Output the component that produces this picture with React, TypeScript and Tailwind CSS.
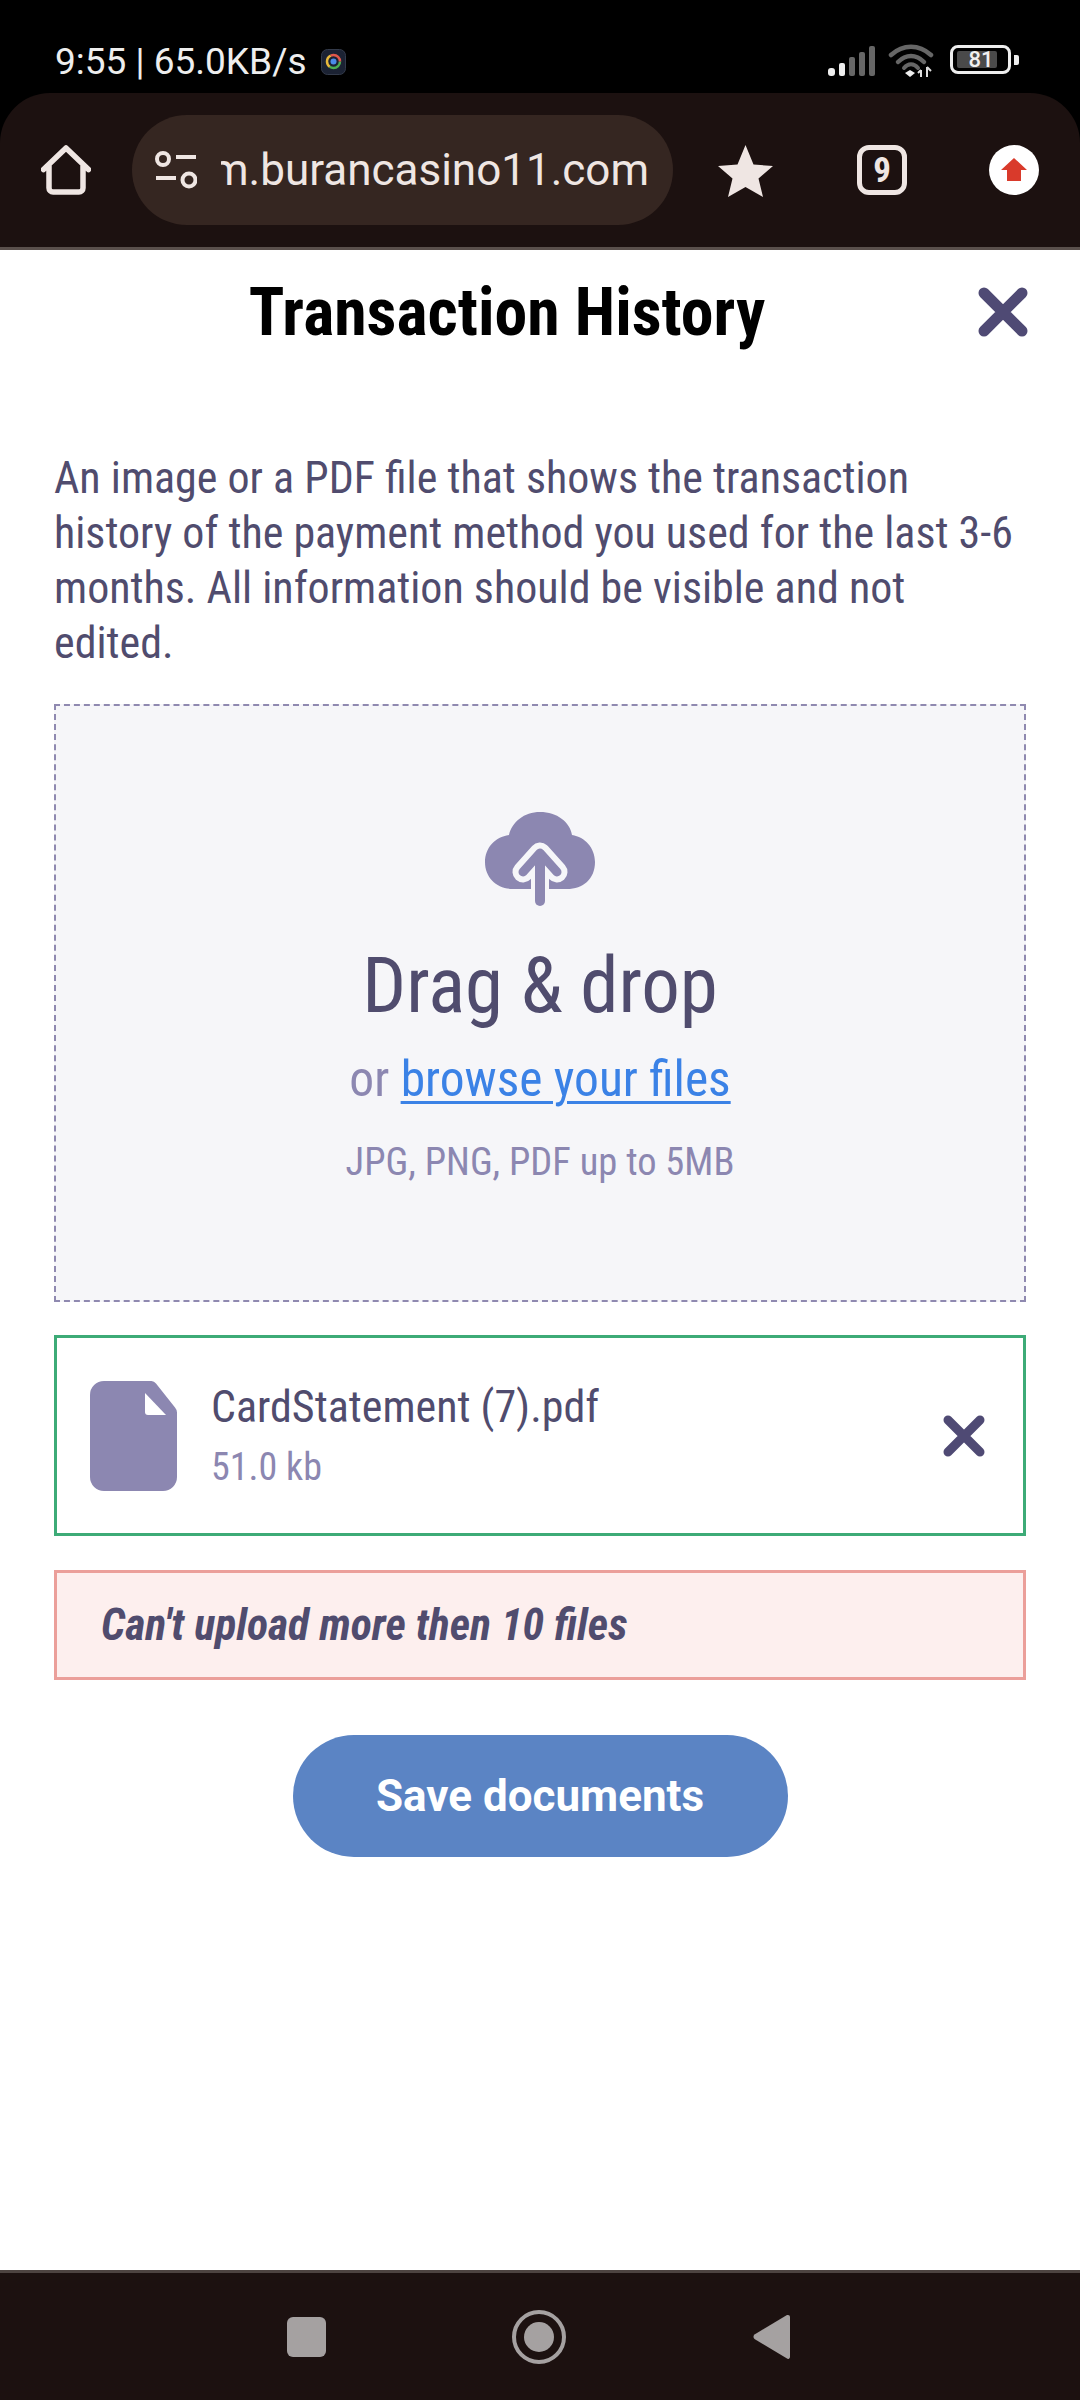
const cond = "font-['Roboto_Condensed','Roboto','Liberation_Sans_Narrow',sans-serif] [font-stretch:75%]";

function Signal() {
  return (
    <svg width="47" height="30" viewBox="0 0 47 30" className="mt-[1px]">
      <rect x="0" y="22" width="7" height="8" rx="3" fill="#eee" />
      <rect x="11" y="17" width="6" height="13" rx="2" fill="#eee" />
      <rect x="21" y="11" width="6" height="19" rx="2" fill="#666" />
      <rect x="31" y="6" width="6" height="24" rx="2" fill="#666" />
      <rect x="41" y="0" width="6" height="30" rx="2" fill="#666" />
    </svg>
  );
}

function Wifi() {
  return (
    <svg width="46" height="34" viewBox="0 0 46 34" fill="none" className="mt-[-1px]">
      <path d="M3 11C15 0 31 0 43 11" stroke="#666" strokeWidth="4.5" strokeLinecap="round" />
      <path d="M10 18C18 10 28 10 36 18" stroke="#666" strokeWidth="4.5" strokeLinecap="round" />
      <path d="M16 24C20 19 26 19 30 24" stroke="#666" strokeWidth="4" strokeLinecap="round" />
      <path d="M17 29l5-3 5 3-5 4z" fill="#eee" />
      <path d="M33 26v7M30 29l3-3" stroke="#ddd" strokeWidth="2" />
      <path d="M39 33v-10M39 23l4 4" stroke="#ddd" strokeWidth="2" />
    </svg>
  );
}

function Battery() {
  return (
    <div className="flex items-center gap-[3px] ml-[3px]">
      <div className="w-[61px] h-[29px] border-[3px] border-[#eeeeee] rounded-[8px] px-[4px] py-[3px] flex">
        <div className="w-[40px] h-full bg-[#4a4a4a] rounded-[2px] flex items-center justify-center text-[#f0f0f0] text-[22px] leading-none font-medium font-['Roboto',sans-serif] pl-[8px]">
          81
        </div>
      </div>
      <div className="w-[5px] h-[10px] bg-[#eeeeee] rounded-r-[2px]" />
    </div>
  );
}

function ChromeBadge() {
  return (
    <svg width="25" height="26" viewBox="0 0 25 26">
      <rect x="0.5" y="0.5" width="24" height="25" rx="6" fill="#1b2233" stroke="#333a4a" />
      <circle cx="12.5" cy="12.5" r="6.5" fill="none" stroke="#4caf50" strokeWidth="2.500" strokeDasharray="14 27" />
      <circle cx="12.5" cy="12.5" r="6.5" fill="none" stroke="#e8b93c" strokeWidth="2.500" strokeDasharray="13 28" strokeDashoffset="-14" />
      <circle cx="12.5" cy="12.5" r="6.5" fill="none" stroke="#e0574a" strokeWidth="2.500" strokeDasharray="14 27" strokeDashoffset="-27" />
      <circle cx="12.5" cy="12.5" r="3" fill="#4a8be8" />
    </svg>
  );
}

export default function App() {
  return (
    <div className="w-[1080px] h-[2400px] flex flex-col bg-black overflow-hidden font-['Roboto',sans-serif]">
      <div className="h-[93px] shrink-0 flex items-start justify-between pl-[55px] pr-[61px] pt-[39px] bg-black">
        <div className="flex items-center gap-[14px] mt-[2px] text-[37px] leading-[42px] text-[#eeeeee]">
          <span>9:55 | 65.0KB/s</span>
          <ChromeBadge />
        </div>
        <div className="flex items-start gap-[13px] mt-[6px]">
          <Signal />
          <Wifi />
          <Battery />
        </div>
      </div>

      <div className="h-[157px] shrink-0 bg-[#1c1110] rounded-t-[50px] border-b-[3px] border-[#5a504c] flex items-start">
        <div className="mt-[52px] ml-[41px] w-[50px] h-[50px]">
          <svg width="50" height="50" viewBox="0 0 50 50" fill="none" stroke="#efe6e3" strokeWidth="5.500" strokeLinejoin="round" strokeLinecap="round">
            <path d="M2.500 24.500L25 3l22.500 21.500M8 21v22a4 4 0 0 0 4 4h26a4 4 0 0 0 4-4V21" />
          </svg>
        </div>
        <div className="mt-[22px] ml-[41px] w-[541px] h-[110px] rounded-full bg-[#352621] flex items-center pl-[23px] pr-[24px]">
          <svg width="42" height="38" viewBox="0 0 42 38" fill="none" stroke="#efe6e3" strokeWidth="4" className="shrink-0">
            <circle cx="8" cy="8" r="6" />
            <path d="M21 6h20M1 27h20" />
            <circle cx="34" cy="29" r="6.500" />
          </svg>
          <div className="ml-[24px] flex-1 overflow-hidden flex justify-end text-[44px] leading-[52px] text-[#efe6e3] whitespace-nowrap">
            <span>m.burancasino11.com</span>
          </div>
        </div>
        <div className="mt-[52px] ml-[45px]">
          <svg width="55" height="52" viewBox="0 0 55 52">
            <path d="M27.500 0l8 19.500 19.500 1.500-14.500 12.500 4.500 18.500-17.500-10-17.500 10 4.500-18.500L0 21l19.500-1.500z" fill="#efe6e3" />
          </svg>
        </div>
        <div className="mt-[52px] ml-[84px] w-[50px] h-[50px] rounded-[12px] border-[5px] border-[#efe6e3] flex items-center justify-center text-[#efe6e3] text-[35px] leading-none font-bold">
          <span className={cond}>9</span>
        </div>
        <div className="mt-[52px] ml-[82px] w-[50px] h-[50px] rounded-full bg-white flex items-center justify-center">
          <svg width="26" height="24" viewBox="0 0 26 24">
            <path d="M13 0l13 12h-6v11H6V12H0z" fill="#d93a2b" />
          </svg>
        </div>
      </div>

      <div className="flex-1 bg-white flex flex-col px-[54px]">
        <div className="relative h-[124px] shrink-0 flex justify-center">
          <h1 className={`${cond} text-[65.8px] leading-[75px] font-bold text-black mt-[25px] ml-[-66px]`}>Transaction History</h1>
          <div className="absolute right-[-2px] top-[37px]">
            <svg width="50" height="50" viewBox="0 0 50 50" fill="none" stroke="#4f4a74" strokeWidth="11" strokeLinecap="round">
              <path d="M6 6l38 38M44 6L6 44" />
            </svg>
          </div>
        </div>
        <p className={`${cond} mt-[77px] text-[44px] leading-[55px] text-[#504c6e]`}>
          An image or a PDF file that shows the transaction history of the payment method you used for the last 3-6 months. All information should be visible and not edited.
        </p>
        <div className="mt-[33px] h-[598px] border-2 border-dashed border-[#8f89b0] bg-[#f6f6f9] flex flex-col items-center shrink-0">
          <div className="mt-[106px]">
            <svg width="110" height="94" viewBox="0 0 110 94" className="block">
              <path d="M55 0c17 0 30 10 32 23 13 2 23 13 23 27 0 17-12 27-28 27H28C12 77 0 66 0 50c0-14 10-25 24-27C27 10 39 0 55 0z" fill="#8c87b1" />
              <path d="M38 60l17-19 17 19" fill="none" stroke="#f6f6f9" strokeWidth="21" strokeLinecap="round" strokeLinejoin="round" />
              <path d="M46 58v19h18V58z" fill="#f6f6f9" />
              <path d="M38 60l17-19 17 19" fill="none" stroke="#8c87b1" strokeWidth="9" strokeLinecap="round" strokeLinejoin="round" />
              <path d="M55 46v43" fill="none" stroke="#8c87b1" strokeWidth="10" strokeLinecap="round" />
            </svg>
          </div>
          <div className={`${cond} mt-[35px] text-[77px] leading-[90px] text-[#504c6e]`}>Drag &amp; drop</div>
          <div className={`${cond} mt-[19px] text-[49.5px] leading-[58px] text-[#8c87b1]`}>
            or <span className="text-[#3b82e6] underline decoration-[3px] underline-offset-[5px]">browse your files</span>
          </div>
          <div className={`${cond} mt-[31px] text-[38.5px] leading-[45px] text-[#8c87b1]`}>JPG, PNG, PDF up to 5MB</div>
        </div>
        <div className="mt-[33px] h-[201px] border-[3px] border-[#3dab77] flex items-center pl-[33px] pr-[38px] shrink-0">
          <svg width="87" height="110" viewBox="0 0 87 110" className="shrink-0">
            <path d="M14 0h46a7 7 0 0 1 6 2.500l19 24a8 8 0 0 1 2 5V96a14 14 0 0 1-14 14H14A14 14 0 0 1 0 96V14A14 14 0 0 1 14 0z" fill="#8c87b1" />
            <path d="M55 12l21 22H58a3 3 0 0 1-3-3z" fill="#ffffff" />
          </svg>
          <div className="ml-[34px] flex-1 flex flex-col mt-[-1px]">
            <span className={`${cond} text-[44px] leading-[52px] text-[#504c6e]`}>CardStatement (7).pdf</span>
            <span className={`${cond} mt-[12px] text-[38px] leading-[45px] text-[#8c87b1]`}>51.0 kb</span>
          </div>
          <svg width="42" height="42" viewBox="0 0 42 42" fill="none" stroke="#4f4a74" strokeWidth="9" strokeLinecap="round" className="shrink-0">
            <path d="M5 5l32 32M37 5L5 37" />
          </svg>
        </div>
        <div className="mt-[34px] h-[110px] border-[3px] border-[#eb9f9a] bg-[#fdefee] flex items-center pl-[44px] shrink-0">
          <span className={`${cond} text-[43.8px] leading-[52px] font-bold italic text-[#504c6e]`}>Can't upload more then 10 files</span>
        </div>
        <button className="mt-[55px] self-center w-[495px] h-[122px] rounded-full bg-[#5b84c4] text-white text-[44px] font-bold shrink-0">
          Save documents
        </button>
      </div>

      <div className="h-[130px] shrink-0 bg-[#1c1110] border-t-[3px] border-[#4d4441] flex items-center">
        <div className="ml-[287px] w-[39px] h-[40px] rounded-[6px] bg-[#a5a1a1]" />
        <div className="ml-[186px] w-[54px] h-[54px] rounded-full border-[4px] border-[#a5a1a1] flex items-center justify-center">
          <div className="w-[30px] h-[30px] rounded-full bg-[#a5a1a1]" />
        </div>
        <svg width="37" height="46" viewBox="0 0 37 46" className="ml-[187px]">
          <path d="M35 1a2 2 0 0 1 2 2v40a2 2 0 0 1-3 1.600L1.500 25a3 3 0 0 1 0-4.500L34 1z" fill="#a5a1a1" />
        </svg>
      </div>
    </div>
  );
}
